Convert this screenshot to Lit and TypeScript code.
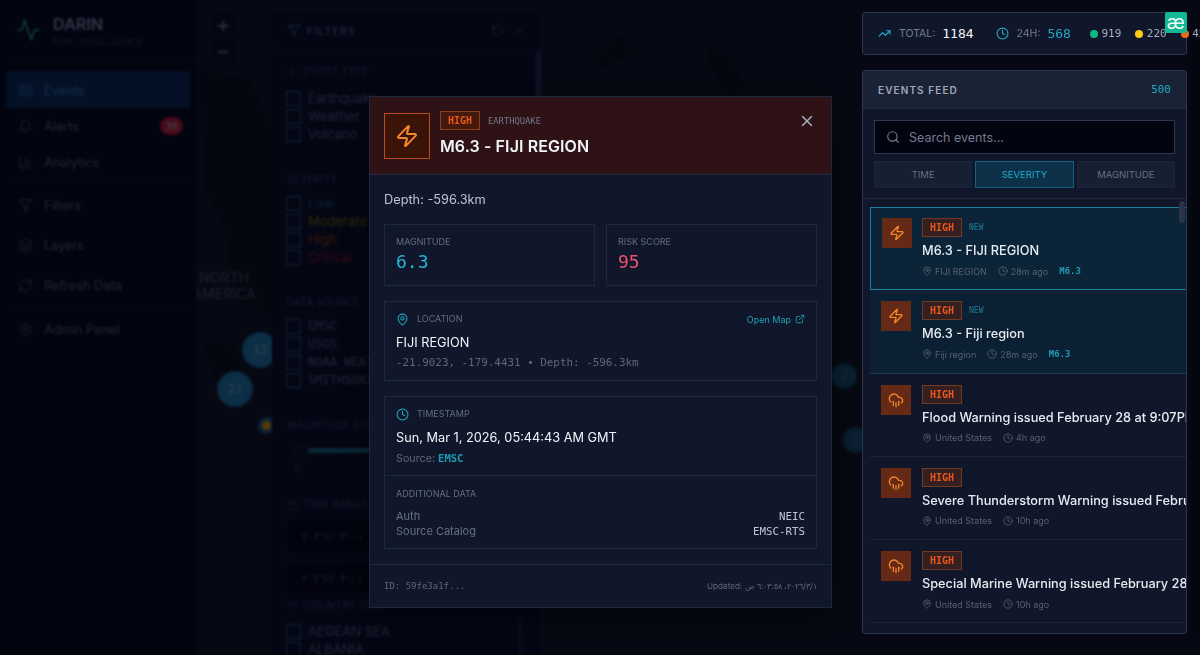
import { LitElement, html, css, svg } from "lit";
import { customElement } from "lit/decorators.js";

const ICONS: Record<string, any> = {
  zap: svg`<path d="M4 14a1 1 0 0 1-.78-1.63l9.9-10.2a.5.5 0 0 1 .86.46l-1.92 6.02A1 1 0 0 0 13 10h7a1 1 0 0 1 .78 1.63l-9.9 10.2a.5.5 0 0 1-.86-.46l1.92-6.02A1 1 0 0 0 11 14z"/>`,
  rain: svg`<path d="M4 14.9A7 7 0 1 1 15.7 8h1.8a4.5 4.5 0 0 1 2.5 8.2"/><path d="M16 14v6"/><path d="M8 14v6"/><path d="M12 16v6"/>`,
  pin: svg`<path d="M20 10c0 5-5.5 10.2-7.4 11.8a1 1 0 0 1-1.2 0C9.5 20.2 4 15 4 10a8 8 0 0 1 16 0"/><circle cx="12" cy="10" r="3"/>`,
  clock: svg`<circle cx="12" cy="12" r="10"/><polyline points="12 6 12 12 16 14"/>`,
  x: svg`<path d="M18 6 6 18"/><path d="m6 6 12 12"/>`,
  search: svg`<circle cx="11" cy="11" r="8"/><path d="m21 21-4.3-4.3"/>`,
  trend: svg`<polyline points="22 7 13.5 15.5 8.5 10.5 2 17"/><polyline points="16 7 22 7 22 13"/>`,
  ext: svg`<path d="M15 3h6v6"/><path d="M10 14 21 3"/><path d="M18 13v6a2 2 0 0 1-2 2H5a2 2 0 0 1-2-2V8a2 2 0 0 1 2-2h6"/>`,
  map: svg`<path d="M14.1 5.55a2 2 0 0 0 1.8 0l3.65-1.83A1 1 0 0 1 21 4.62v12.76a1 1 0 0 1-.55.9l-4.55 2.27a2 2 0 0 1-1.8 0l-4.2-2.1a2 2 0 0 0-1.8 0l-3.65 1.83A1 1 0 0 1 3 19.38V6.62a1 1 0 0 1 .55-.9L8.1 3.45a2 2 0 0 1 1.8 0z"/><path d="M15 5.76v15"/><path d="M9 3.24v15"/>`,
  bell: svg`<path d="M10.27 21a2 2 0 0 0 3.46 0"/><path d="M3.26 15.33A1 1 0 0 0 4 17h16a1 1 0 0 0 .74-1.67C19.41 13.96 18 12.5 18 8A6 6 0 0 0 6 8c0 4.5-1.41 5.96-2.74 7.33"/>`,
  chart: svg`<path d="M3 3v16a2 2 0 0 0 2 2h16"/><path d="M18 17V9"/><path d="M13 17V5"/><path d="M8 17v-3"/>`,
  filter: svg`<polygon points="22 3 2 3 10 12.46 10 19 14 21 14 12.46 22 3"/>`,
  layers: svg`<path d="M12.83 2.18a2 2 0 0 0-1.66 0L2.6 6.08a1 1 0 0 0 0 1.83l8.58 3.91a2 2 0 0 0 1.66 0l8.58-3.9a1 1 0 0 0 0-1.83Z"/><path d="m22 17.65-9.17 4.16a2 2 0 0 1-1.66 0L2 17.65"/><path d="m22 12.65-9.17 4.16a2 2 0 0 1-1.66 0L2 12.65"/>`,
  refresh: svg`<path d="M3 12a9 9 0 0 1 9-9 9.75 9.75 0 0 1 6.74 2.74L21 8"/><path d="M21 3v5h-5"/><path d="M21 12a9 9 0 0 1-9 9 9.75 9.75 0 0 1-6.74-2.74L3 16"/><path d="M8 16H3v5"/>`,
  gear: svg`<path d="M12.22 2h-.44a2 2 0 0 0-2 2v.18a2 2 0 0 1-1 1.73l-.43.25a2 2 0 0 1-2 0l-.15-.08a2 2 0 0 0-2.73.73l-.22.38a2 2 0 0 0 .73 2.73l.15.1a2 2 0 0 1 1 1.72v.51a2 2 0 0 1-1 1.74l-.15.09a2 2 0 0 0-.73 2.73l.22.38a2 2 0 0 0 2.73.73l.15-.08a2 2 0 0 1 2 0l.43.25a2 2 0 0 1 1 1.73V20a2 2 0 0 0 2 2h.44a2 2 0 0 0 2-2v-.18a2 2 0 0 1 1-1.73l.43-.25a2 2 0 0 1 2 0l.15.08a2 2 0 0 0 2.73-.73l.22-.39a2 2 0 0 0-.73-2.73l-.15-.08a2 2 0 0 1-1-1.74v-.5a2 2 0 0 1 1-1.74l.15-.09a2 2 0 0 0 .73-2.73l-.22-.38a2 2 0 0 0-2.73-.73l-.15.08a2 2 0 0 1-2 0l-.43-.25a2 2 0 0 1-1-1.73V4a2 2 0 0 0-2-2z"/><circle cx="12" cy="12" r="3"/>`,
  activity: svg`<path d="M22 12h-4l-3 9L9 3l-3 9H2"/>`,
  calendar: svg`<path d="M8 2v4"/><path d="M16 2v4"/><rect width="18" height="18" x="3" y="4" rx="2"/><path d="M3 10h18"/>`,
  rotate: svg`<path d="M3 12a9 9 0 1 0 9-9 9.75 9.75 0 0 0-6.74 2.74L3 8"/><path d="M3 3v5h5"/>`,
};

const icon = (name: string, size: number, sw = 2) => html`<svg class="ic" width=${size} height=${size} viewBox="0 0 24 24" fill="none" stroke="currentColor" stroke-width=${sw} stroke-linecap="round" stroke-linejoin="round">${ICONS[name]}</svg>`;

const FEED = [
  { ic: "zap", title: "M6.3 - FIJI REGION", place: "FIJI REGION", ago: "28m ago", mag: "M6.3", isNew: true, sel: true },
  { ic: "zap", title: "M6.3 - Fiji region", place: "Fiji region", ago: "28m ago", mag: "M6.3", isNew: true },
  { ic: "rain", title: "Flood Warning issued February 28 at 9:07PM CST", place: "United States", ago: "4h ago" },
  { ic: "rain", title: "Severe Thunderstorm Warning issued February 28", place: "United States", ago: "10h ago" },
  { ic: "rain", title: "Special Marine Warning issued February 28 at 9:00", place: "United States", ago: "10h ago" },
];

@customElement("app-root")
export class AppRoot extends LitElement {
  static styles = css`
    :host { display: block; font-family: Inter, "Noto Sans", sans-serif; }
    * { box-sizing: border-box; }
    .ic { display: block; flex: none; }
    .mono { font-family: "DejaVu Sans Mono", "Liberation Mono", monospace; }
    .page { position: relative; height: 655px; width: 100%; overflow: hidden; display: flex; background: #111630; }

    .maplayer { position: absolute; inset: 0; }
    .maplayer svg { position: absolute; inset: 0; }
    .maplabel { position: absolute; left: 186px; top: 270px; width: 76px; font-size: 14px; line-height: 16px; font-weight: 500; text-align: center; color: #3e4462; }
    .cluster { position: absolute; border-radius: 50%; display: flex; align-items: center; justify-content: center; background: #1f74ae; border: 2px solid #1a6498; color: #7aa0c0; font-size: 12px; font-family: "DejaVu Sans Mono", monospace; }
    .cluster.dim { background: #164f78; border-color: #134468; color: #3c6484; }
    .dot { position: absolute; border-radius: 50%; background: #c89010; box-shadow: 0 0 0 4px #24508c; }

    .side { position: relative; flex: none; width: 197px; height: 100%; background: #050a26; border-right: 1px solid #11183a; }
    .brand { height: 60px; display: flex; align-items: center; gap: 12px; padding: 0 0 0 15px; border-bottom: 1px solid #0d1434; }
    .brand .logo { color: #2f8fa8; }
    .brand b { display: block; font-size: 16px; line-height: 20px; margin-top: 2px; font-weight: 700; color: #6b75a0; }
    .brand small { display: block; font-size: 8px; line-height: 10px; margin-top: 4px; letter-spacing: .45px; color: #2d3860; font-family: "DejaVu Sans Mono", monospace; white-space: nowrap; }
    .nav { display: flex; flex-direction: column; padding: 11px 6px 0; }
    .navitem { height: 37px; margin-bottom: -1px; display: flex; align-items: center; gap: 11px; padding: 1px 0 0 12px; font-size: 12.75px; color: #505c84; }
    .navitem.on { background: #0a2a60; color: #2d76be; }
    .navitem .count { margin-left: auto; margin-right: 7px; width: 23px; height: 18px; border-radius: 9px; background: #b01a40; color: #b0a0b0; font-size: 10px; font-weight: 500; display: flex; align-items: center; justify-content: center; }
    .sep { height: 1px; background: #0d1434; margin: 3px 0 0; }
    .navitem.gap { height: 40px; margin-bottom: 0; }
    .navitem.first { margin-top: 2px; }

    .main { position: relative; flex: 1; display: flex; align-items: flex-start; min-width: 0; }
    .zoomctl { flex: none; margin: 11px 0 0 13px; width: 26px; height: 52px; display: flex; flex-direction: column; background: #0c1230; color: #6a7090; font-size: 22px; line-height: 26px; text-align: center; }
    .zoomctl span { height: 26px; border-bottom: 1px solid #161d40; }
    .zoomctl span:last-child { border: 0; }
    .filters { flex: none; margin: 12px 0 0 36px; width: 270px; height: 643px; background: #0a0f32; border-right: 1px solid #141c44; position: relative; overflow: hidden; }
    .fhead { height: 38px; display: flex; align-items: center; gap: 6px; padding: 0 15px; border-bottom: 1px solid #121a42; font-size: 10px; font-weight: 600; letter-spacing: 1.4px; color: #4a5680; }
    .fhead .fil { color: #2f7f9a; }
    .fhead .acts { margin-left: auto; display: flex; gap: 9px; color: #4a5578; }
    .scroll { position: absolute; right: 0; top: 38px; width: 5px; height: 260px; background: #222c54; border-radius: 3px; }
    .thumb2 { position: absolute; left: 246px; top: 606px; width: 5px; height: 40px; background: #141c40; }
    .fbody { padding: 0 15px; }
    .flabel { display: flex; align-items: center; gap: 6px; height: 14px; font-size: 10px; letter-spacing: .3px; color: #343f66; white-space: nowrap; }
    .flabel.country { margin-top: 3px; }
    .check { height: 18px; display: flex; align-items: center; gap: 7px; font-size: 13px; color: #4d5880; white-space: nowrap; }
    .check i { width: 15px; height: 15px; border: 1px solid #2a6080; display: block; flex: none; margin-left: -1px; }
    .checks { margin-top: 8px; }
    .checks.top { margin-top: 11px; }
    .checks.low { margin-top: 10px; }
    .checks .mono { font-size: 12px; }
    .sect { margin-top: 29px; }
    .sect.s14 { margin-top: 14px; }
    .sect.s24 { margin-top: 24px; }
    .slider { position: relative; height: 14px; margin-top: 12px; margin-left: 6px; }
    .slider::before { content: ""; position: absolute; left: 8px; right: -20px; top: 4px; height: 5px; background: #1a6288; }
    .slider::after { content: ""; position: absolute; left: 0; top: 0; width: 14px; height: 14px; border-radius: 50%; background: #0a1030; border: 1px solid #24345c; }
    .sval { font-size: 10px; color: #343f66; margin: 3px 0 0 7px; }
    .dateinp { height: 34px; background: #050924; border: 1px solid #121a42; display: flex; align-items: center; padding-left: 14px; font-size: 11px; color: #39456c; margin-top: 8px; }

    .overlay { position: absolute; inset: 0; z-index: 10; background: rgba(0, 0, 0, .6); backdrop-filter: blur(1px); display: flex; justify-content: center; align-items: flex-start; padding: 96px 0 0 1px; }
    .modal { width: 463px; height: 512px; background: #10172b; border: 1px solid #1e2940; display: flex; flex-direction: column; box-shadow: 0 10px 30px rgba(0,0,0,.4); }
    .mhead { height: 78px; flex: none; background: #2e1216; border-bottom: 1px solid #232c40; display: flex; padding: 16px 14px 0; position: relative; }
    .bigicon { width: 46px; height: 46px; background: #3a1408; border: 1px solid #b84c1e; color: #f5862a; display: flex; align-items: center; justify-content: center; }
    .mtitle { margin: -2px 0 0 10px; }
    .tagrow { display: flex; align-items: center; gap: 8px; height: 19px; }
    .badge { width: 40px; height: 19px; flex: none; border: 1px solid #8a3e1e; background: #45190c; color: #e8581a; font-size: 10px; font-weight: 700; display: flex; align-items: center; justify-content: center; }
    .item .badge { background: #361f20; border-color: #6e3a24; }
    .kind { font-size: 8.8px; color: #737a8c; }
    .mtitle h2 { margin: 6px 0 0; font-size: 16px; line-height: 20px; font-weight: 600; color: #f1f5f9; letter-spacing: .1px; }
    .close { position: absolute; right: 15px; top: 15px; color: #a6adbb; }
    .mbody { flex: 1; padding: 15px 14px 0; }
    .depth { font-size: 12.75px; line-height: 20px; color: #bcc3cf; margin-bottom: 14px; }
    .stats { display: grid; grid-template-columns: 1fr 1fr; gap: 11px; margin-bottom: 15px; }
    .card { border: 1px solid #1e2940; padding: 0 11px; }
    .stat { height: 62px; padding-top: 11px; }
    .lbl { font-size: 9px; line-height: 12px; color: #646d82; white-space: nowrap; }
    .val { font-size: 18px; line-height: 22px; margin-top: 3px; }
    .cyan { color: #22b8d4; }
    .rose { color: #f0506e; }
    .loc { height: 80px; margin-bottom: 15px; padding-top: 10px; }
    .lhead { display: flex; align-items: center; gap: 8px; height: 14px; color: #22a0b8; }
    .open { margin-left: auto; display: flex; align-items: center; gap: 4px; font-size: 9px; color: #22a0b8; }
    .v1 { font-size: 12.75px; line-height: 18px; margin-top: 8px; color: #f1f5f9; white-space: nowrap; }
    .v2 { font-size: 10.9px; line-height: 14px; margin-top: 4px; color: #5f6779; white-space: nowrap; }
    .src { font-size: 10.75px; line-height: 14px; margin-top: 4px; color: #5f6779; }
    .src b { color: #1e9cb4; font-weight: 700; font-size: 10.5px; }
    .add { height: 74px; margin-top: -1px; padding-top: 12px; }
    .row { display: flex; justify-content: space-between; font-size: 11px; line-height: 15px; color: #687084; }
    .rows { margin-top: 9px; }
    .row b { font-size: 10.8px; font-weight: 400; color: #c0c6d2; }
    .mfoot { height: 43px; flex: none; border-top: 1px solid #1e2940; display: flex; align-items: center; justify-content: space-between; padding: 0 14px; font-size: 8.2px; color: #5f6779; }
    .mfoot .mono { font-size: 9px; }
    .mfoot span { white-space: nowrap; }

    .right { position: absolute; z-index: 20; left: 862px; top: 12px; width: 325px; display: flex; flex-direction: column; gap: 15px; }
    .status { height: 43px; background: #10172b; border: 1px solid #2c3650; border-radius: 3px; display: flex; align-items: center; padding-left: 15px; white-space: nowrap; }
    .st { font-size: 10.5px; color: #757d90; margin-left: 8px; }
    .num { font-size: 13px; margin-left: 7px; color: #f1f5f9; }
    .num.t { color: #26a5c0; }
    .clk { margin-left: 22px; color: #26a5c0; }
    .pip { display: block; width: 8px; height: 8px; border-radius: 50%; flex: none; }
    .pip.lead { margin-left: 19px; }
    .pnum { font-size: 11px; color: #a8afbd; margin-left: 3.5px; margin-right: 14px; }
    .ae { position: absolute; right: 0; top: 0; width: 22px; height: 21px; background: #12b894; color: #f2fbf8; border-radius: 2px; display: flex; align-items: center; justify-content: center; font-size: 20px; line-height: 1; padding-bottom: 2px; }
    .feed { position: relative; height: 564px; background: #10172b; border: 1px solid #2c3650; border-radius: 3px; overflow: hidden; }
    .fdhead { height: 38px; display: flex; align-items: center; justify-content: space-between; padding: 0 15px; background: #1a2236; border-bottom: 1px solid #1e2940; }
    .fdhead b { font-size: 10px; font-weight: 600; letter-spacing: 1.1px; color: #a0a8b8; }
    .fdhead span { font-size: 11px; color: #26a5c0; }
    .tools { height: 90px; padding: 11px 11px 0; border-bottom: 1px solid #1e2940; }
    .search { height: 34px; background: #02040f; border: 1px solid #2c3650; display: flex; align-items: center; gap: 9px; padding-left: 11px; font-size: 12.5px; color: #737b8e; }
    .tabs { display: grid; grid-template-columns: repeat(3, 1fr); gap: 3px; margin-top: 7px; }
    .tab { height: 27px; background: #171f33; border: 1px solid #1c2439; display: flex; align-items: center; justify-content: center; font-size: 9.5px; color: #687084; }
    .tab.on { background: #0d3148; border-color: #17607f; color: #22a8c8; }
    .list { padding: 8px 0 0 7px; overflow: hidden; height: 434px; }
    .item { width: 330px; height: 83.25px; padding: 11px 0 0 11px; display: flex; gap: 11px; border-bottom: 1px solid #1c2540; overflow: hidden; }
    .item.new { background: #0c2033; border-bottom-color: #1a3a52; }
    .item.sel { background: #0c2438; border: 1px solid #1d7f9e; padding: 10px 0 0 11px; }
    .item.sel .ibody { margin-left: -1px; }
    .fic { width: 30px; height: 30px; flex: none; background: #642a15; color: #f5862a; display: flex; align-items: center; justify-content: center; }
    .ibody { min-width: 0; flex: 1; overflow: hidden; }
    .itag { display: flex; align-items: center; gap: 7px; height: 19px; }
    .itag em { font-style: normal; font-size: 8px; color: #1f7b98; }
    .ititle { font-size: 12.75px; font-weight: 500; line-height: 18px; color: #e7ebf1; margin-top: 5px; white-space: nowrap; }
    .imeta { display: flex; align-items: center; height: 14px; margin-top: 4px; font-size: 9px; color: #586072; white-space: nowrap; }
    .imeta .ic { margin-right: 3px; }
    .imeta .ago { margin-left: 11px; display: flex; align-items: center; }
    .imeta b { margin-left: 11px; color: #1e9cb4; font-weight: 700; font-size: 9px; }
    .thumb { position: absolute; left: 316px; top: 130px; width: 6px; height: 22px; background: #2a3348; border-radius: 3px; }
  `;

  private check(label: string, color = "", mono = false) {
    return html`<div class="check" style=${color ? `color:${color}` : ""}><i></i><span class=${mono ? "mono" : ""}>${label}</span></div>`;
  }

  private nav(ic: string, label: string, cls = "", count = "") {
    return html`<div class="navitem ${cls}">${icon(ic, 15, 1.5)}<span>${label}</span>${count ? html`<span class="count">${count}</span>` : ""}</div>`;
  }

  render() {
    return html`<div class="page">
      <div class="maplayer">
        <svg width="1200" height="655" viewBox="0 0 1200 655">
          <g fill="#0c1028">
            <path d="M198 70 L250 80 L272 130 L272 320 L235 300 L225 230 L205 190 Z"/>
            <path d="M590 60 L620 35 L640 50 L600 70 Z"/>
            <path d="M705 45 L725 50 L745 85 L730 95 L710 70 Z"/>
            <path d="M200 340 L235 345 L245 375 L215 380 Z"/>
            <path d="M1190 30 L1200 20 L1200 640 L1190 640 Z"/>
          </g>
        </svg>
        <div class="maplabel">NORTH<br />AMERICA</div>
        <div class="cluster" style="left:242px;top:332px;width:36px;height:36px">13</div>
        <div class="cluster" style="left:217px;top:371px;width:36px;height:36px">22</div>
        <div class="dot" style="left:262px;top:421px;width:9px;height:9px"></div>
        <div class="cluster dim" style="left:831px;top:363px;width:26px;height:26px">2</div>
        <div class="cluster dim" style="left:843px;top:427px;width:26px;height:26px">2</div>
      </div>

      <aside class="side">
        <div class="brand">
          <span class="logo">${icon("activity", 26, 1.5)}</span>
          <div><b>DARIN</b><small>RISK INTELLIGENCE</small></div>
        </div>
        <nav class="nav">
          ${this.nav("map", "Events", "on")}
          ${this.nav("bell", "Alerts", "", "39")}
          ${this.nav("chart", "Analytics")}
          <div class="sep"></div>
          ${this.nav("filter", "Filters", "gap first")}
          ${this.nav("layers", "Layers", "gap")}
          ${this.nav("refresh", "Refresh Data", "gap")}
          <div class="sep"></div>
          ${this.nav("gear", "Admin Panel", "gap")}
        </nav>
      </aside>

      <main class="main">
        <div class="zoomctl"><span>+</span><span>−</span></div>
        <section class="filters">
          <div class="fhead">
            <span class="fil">${icon("filter", 14, 1.5)}</span><span>FILTERS</span>
            <span class="acts">${icon("rotate", 13, 1.5)}${icon("x", 13, 1.5)}</span>
          </div>
          <div class="scroll"></div>
          <div class="thumb2"></div>
          <div class="fbody">
            <div class="sect s14"><div class="flabel">${icon("zap", 11, 1.5)}EVENT TYPE</div></div>
            <div class="checks top">${this.check("Earthquake")}${this.check("Weather")}${this.check("Volcano")}</div>
            <div class="sect"><div class="flabel">SEVERITY</div></div>
            <div class="checks">${this.check("Low", "#144e74")}${this.check("Moderate", "#6e6014")}${this.check("High", "#80381e")}${this.check("Critical", "#80183c")}</div>
            <div class="sect"><div class="flabel">DATA SOURCE</div></div>
            <div class="checks">${this.check("EMSC", "", true)}${this.check("USGS", "", true)}${this.check("NOAA_WEATHER", "", true)}${this.check("SMITHSONIAN", "", true)}</div>
            <div class="sect"><div class="flabel">MAGNITUDE RANGE</div></div>
            <div class="slider"></div>
            <div class="sval">0</div>
            <div class="sect s24"><div class="flabel">${icon("calendar", 11, 1.5)}TIME RANGE</div></div>
            <div class="dateinp">٠١-٠٣//٢٠٢٦</div>
            <div class="dateinp">٠١-٠٣//٢٠٢٦</div>
            <div class="flabel country">${icon("pin", 11, 1.5)}COUNTRY (128)</div>
            <div class="checks low">${this.check("AEGEAN SEA")}${this.check("ALBANIA")}</div>
          </div>
        </section>
      </main>

      <div class="overlay">
        <article class="modal">
          <header class="mhead">
            <div class="bigicon">${icon("zap", 24, 2)}</div>
            <div class="mtitle">
              <div class="tagrow"><span class="badge mono">HIGH</span><span class="kind mono">EARTHQUAKE</span></div>
              <h2>M6.3 - FIJI REGION</h2>
            </div>
            <span class="close">${icon("x", 18, 2)}</span>
          </header>
          <div class="mbody">
            <div class="depth">Depth: -596.3km</div>
            <div class="stats">
              <div class="card stat"><div class="lbl">MAGNITUDE</div><div class="val mono cyan">6.3</div></div>
              <div class="card stat"><div class="lbl">RISK SCORE</div><div class="val mono rose">95</div></div>
            </div>
            <div class="card loc">
              <div class="lhead">${icon("pin", 13, 2)}<span class="lbl">LOCATION</span><span class="open">Open Map ${icon("ext", 10, 2)}</span></div>
              <div class="v1">FIJI REGION</div>
              <div class="v2 mono">-21.9023, -179.4431 • Depth: -596.3km</div>
            </div>
            <div class="card loc" style="margin-bottom:0">
              <div class="lhead">${icon("clock", 13, 2)}<span class="lbl">TIMESTAMP</span></div>
              <div class="v1">Sun, Mar 1, 2026, 05:44:43 AM GMT</div>
              <div class="src">Source: <b class="mono">EMSC</b></div>
            </div>
            <div class="card add">
              <div class="lbl">ADDITIONAL DATA</div>
              <div class="rows">
                <div class="row"><span>Auth</span><b class="mono">NEIC</b></div>
                <div class="row"><span>Source Catalog</span><b class="mono">EMSC-RTS</b></div>
              </div>
            </div>
          </div>
          <footer class="mfoot"><span class="mono">ID: 59fe3a1f...</span><span>Updated: ١‏/٣‏/٢٠٢٦، ٦:٠٣:٥٨ ص</span></footer>
        </article>
      </div>

      <div class="right">
        <div class="status">
          <span class="cyan">${icon("trend", 13, 2)}</span><span class="st">TOTAL:</span><span class="num mono">1184</span>
          <span class="clk">${icon("clock", 13, 2)}</span><span class="st">24H:</span><span class="num mono t">568</span>
          <span class="pip lead" style="background:#10b981"></span><span class="pnum mono">919</span>
          <span class="pip" style="background:#facc15"></span><span class="pnum mono">220</span>
          <span class="pip" style="background:#ea6a1a"></span><span class="pnum mono">45</span>
          <span class="ae">æ</span>
        </div>
        <section class="feed">
          <div class="fdhead"><b>EVENTS FEED</b><span class="mono">500</span></div>
          <div class="tools">
            <div class="search">${icon("search", 14, 2)}<span>Search events...</span></div>
            <div class="tabs"><div class="tab">TIME</div><div class="tab on">SEVERITY</div><div class="tab">MAGNITUDE</div></div>
          </div>
          <div class="list">
            ${FEED.map((f) => html`<div class="item ${f.isNew ? "new" : ""} ${f.sel ? "sel" : ""}">
              <div class="fic">${icon(f.ic, 16, 2)}</div>
              <div class="ibody">
                <div class="itag"><span class="badge mono">HIGH</span>${f.isNew ? html`<em class="mono">NEW</em>` : ""}</div>
                <div class="ititle">${f.title}</div>
                <div class="imeta">${icon("pin", 10, 2)}<span>${f.place}</span><span class="ago">${icon("clock", 10, 2)}${f.ago}</span>${f.mag ? html`<b class="mono">${f.mag}</b>` : ""}</div>
              </div>
            </div>`)}
          </div>
          <div class="thumb"></div>
        </section>
      </div>
    </div>`;
  }
}
